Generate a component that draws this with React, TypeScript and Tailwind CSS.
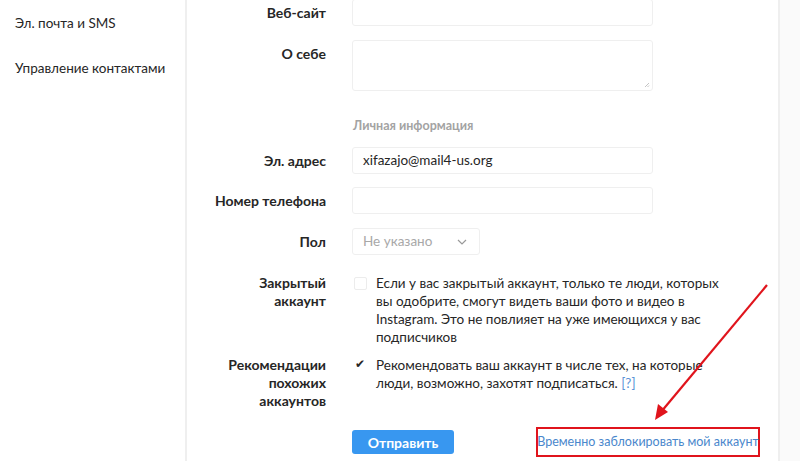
import React from "react"

const font = { fontFamily: 'Lato, "Noto Sans", sans-serif' }

function Label({ children }: { children: React.ReactNode }) {
  return (
    <div className="w-[139px] shrink-0 text-right text-[14px] leading-[18px] font-bold text-[#262626]">
      {children}
    </div>
  )
}

export default function App() {
  return (
    <div className="relative flex h-[461px] w-[800px] overflow-hidden bg-white" style={font}>
      {/* sidebar */}
      <div className="w-[187px] shrink-0 border-r-2 border-[#efefef] pl-[15px] text-[13.5px] text-[#262626]">
        <div className="mt-[14px] leading-[18px]">Эл. почта и SMS</div>
        <div className="mt-[27px] leading-[18px]">Управление контактами</div>
      </div>

      {/* main form */}
      <div className="w-[593px] shrink-0 border-r-2 border-[#efefef] text-[#262626]">
        <div className="flex items-center -mt-[1px]">
          <Label>Веб-сайт</Label>
          <div className="ml-[26px] h-[27px] w-[301px] rounded-[3px] border border-[#efefef]" />
        </div>

        <div className="mt-[14px] flex items-start">
          <div className="pt-[5px]"><Label>О себе</Label></div>
          <div className="relative ml-[26px] h-[51px] w-[301px] rounded-[3px] border border-[#efefef]">
            <svg className="absolute bottom-[2px] right-[2px]" width="6" height="6" viewBox="0 0 6 6">
              <path d="M1 5 L5 1 M3.5 5 L5 3.5" stroke="#b5b5b5" strokeWidth="0.8" />
            </svg>
          </div>
        </div>

        <div className="mt-[26px] pl-[166px] text-[12.5px] leading-[18px] font-bold text-[#a3a3a3]">
          Личная информация
        </div>

        <div className="mt-[12px] flex items-center">
          <Label>Эл. адрес</Label>
          <div className="ml-[26px] flex h-[27px] w-[301px] items-center rounded-[3px] border border-[#efefef] pl-[10px] text-[13.5px]">
            xifazajo@mail4-us.org
          </div>
        </div>

        <div className="mt-[13px] flex items-center">
          <Label>Номер телефона</Label>
          <div className="ml-[26px] h-[27px] w-[301px] rounded-[3px] border border-[#efefef]" />
        </div>

        <div className="mt-[14px] flex items-center">
          <Label>Пол</Label>
          <div className="ml-[26px] flex h-[27px] w-[128px] items-center justify-between rounded-[3px] border border-[#efefef] pl-[10px] pr-[12px] text-[13.5px] text-[#a8a8a8]">
            <span>Не указано</span>
            <svg width="10" height="6" viewBox="0 0 10 6">
              <path d="M1 1 L5 5 L9 1" fill="none" stroke="#999" strokeWidth="1.2" />
            </svg>
          </div>
        </div>

        <div className="mt-[19px] flex items-start">
          <Label>
            Закрытый
            <br />
            аккаунт
          </Label>
          <div className="ml-[28px] mt-[3px] h-[13px] w-[13px] shrink-0 rounded-[2px] border border-[#ececec]" />
          <div className="ml-[9px] whitespace-nowrap text-[13.5px] leading-[18px]">
            Если у вас закрытый аккаунт, только те люди, которых
            <br />
            вы одобрите, смогут видеть ваши фото и видео в
            <br />
            Instagram. Это не повлияет на уже имеющихся у вас
            <br />
            подписчиков
          </div>
        </div>

        <div className="mt-[10px] flex items-start">
          <Label>
            Рекомендации
            <br />
            похожих
            <br />
            аккаунтов
          </Label>
          <div className="ml-[29px] w-[12px] shrink-0 text-[12px] leading-[16px]">✔</div>
          <div className="ml-[9px] whitespace-nowrap text-[13.5px] leading-[18px]">
            Рекомендовать ваш аккаунт в числе тех, на которые
            <br />
            люди, возможно, захотят подписаться. <span className="text-[#5a93d6]">[?]</span>
          </div>
        </div>

        <div className="mt-[17px] flex items-center pl-[165px]">
          <button className="h-[24px] w-[102px] rounded-[3px] bg-[#3897f0] text-[14px] font-bold text-white">
            Отправить
          </button>
          <div className="ml-[82px] flex h-[30px] w-[224px] items-center justify-center whitespace-nowrap border-2 border-[#e0141c] text-[12.5px] text-[#4a87cc]">
            Временно заблокировать мой аккаунт
          </div>
        </div>
      </div>

      <div className="flex-1 bg-[#fafafa]" />

      {/* red annotation arrow */}
      <svg className="pointer-events-none absolute left-0 top-0" width="800" height="461">
        <line x1="767" y1="285" x2="661" y2="412" stroke="#e0141c" strokeWidth="2.2" />
        <path d="M655 420 L658 404 L668 412 Z" fill="#e0141c" />
      </svg>
    </div>
  )
}
